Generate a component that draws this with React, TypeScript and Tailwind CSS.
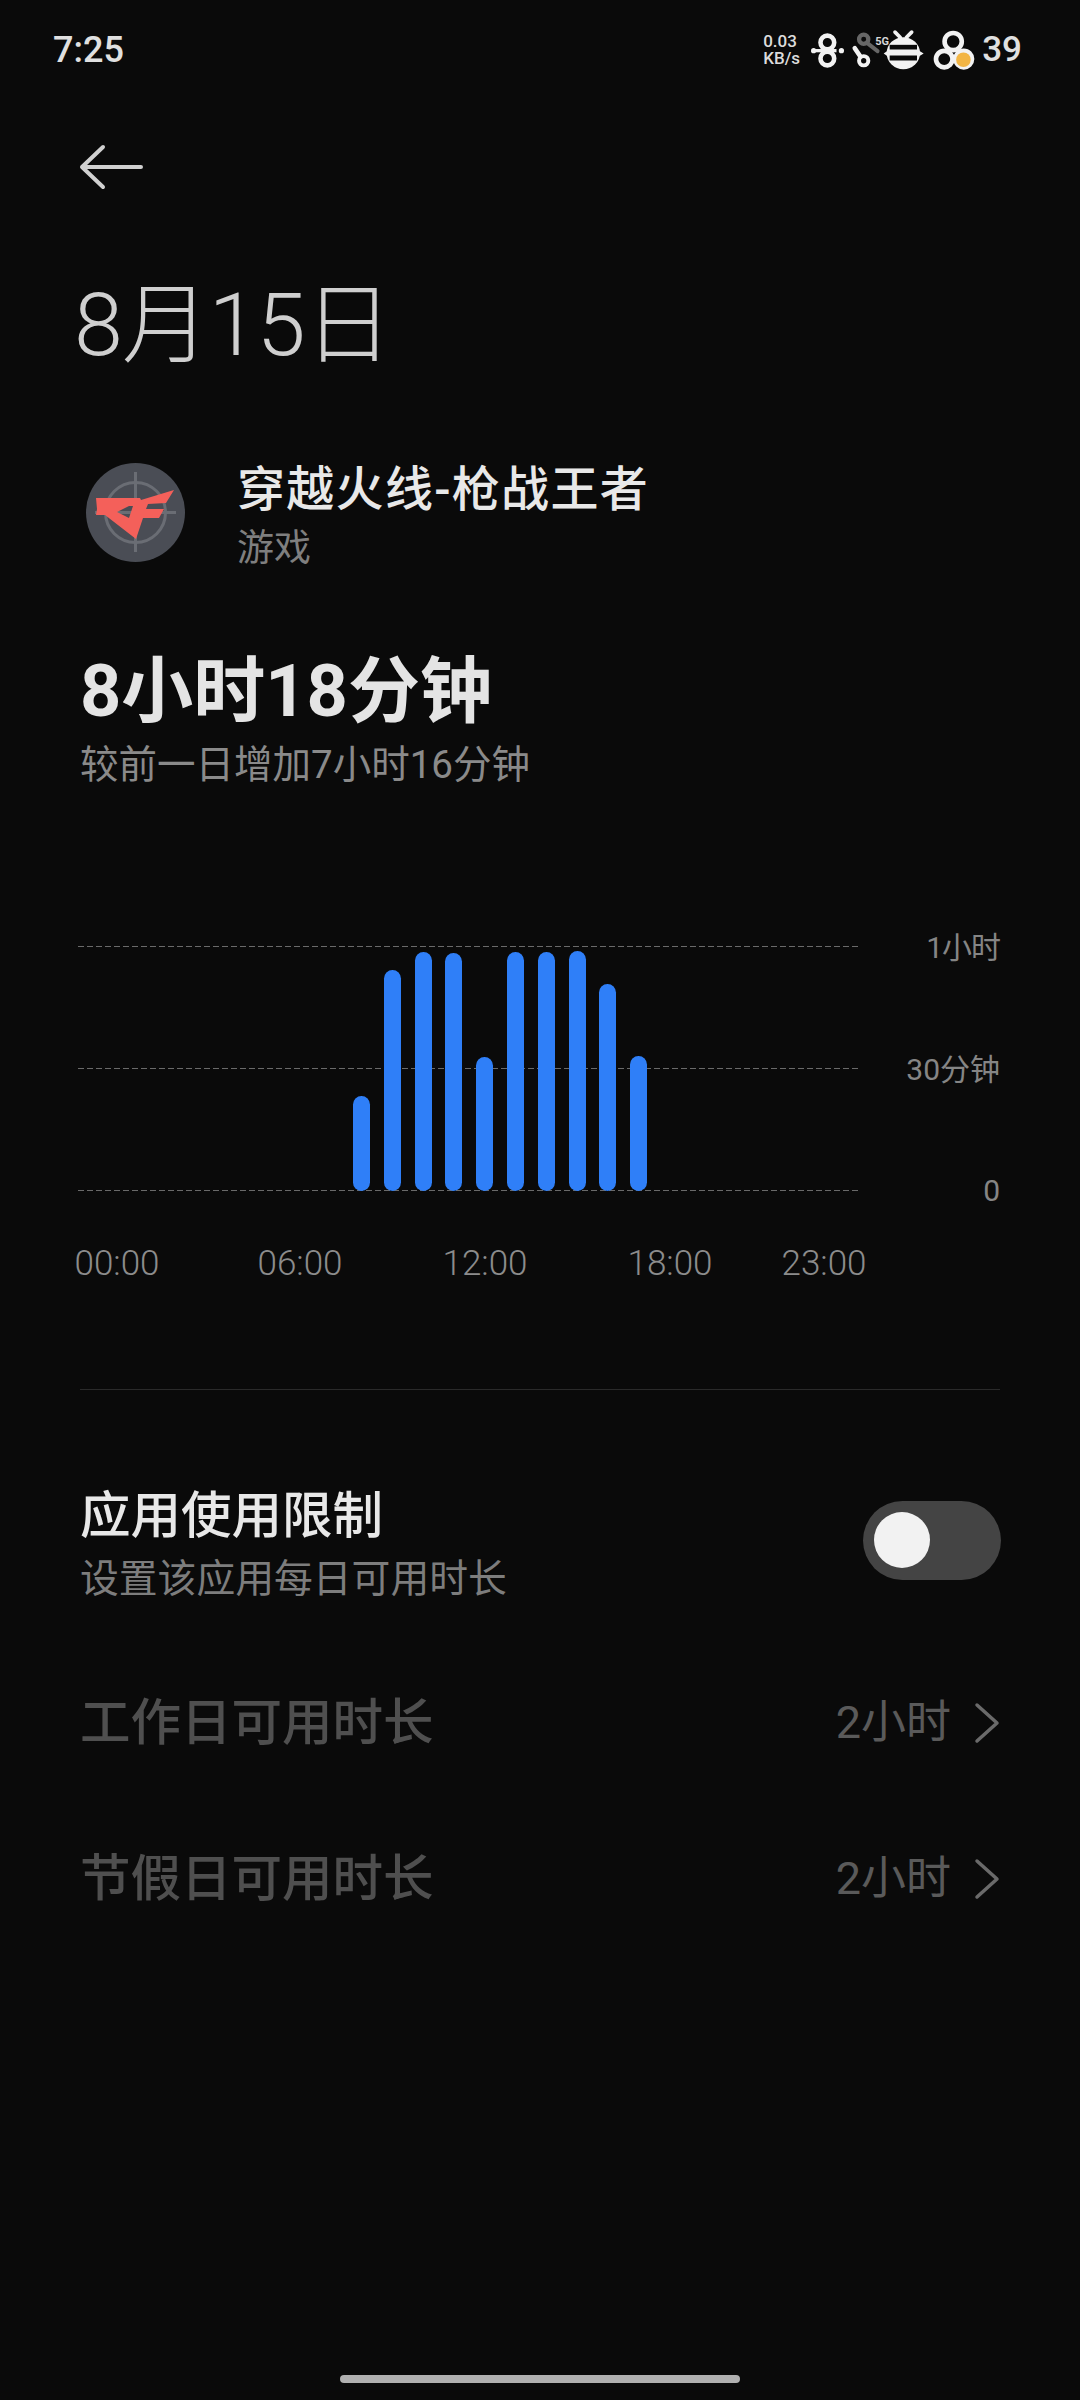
import React from "react";

const font = { fontFamily: '"Roboto", "Noto Sans CJK SC", sans-serif' };
const dash = "h-px bg-[repeating-linear-gradient(90deg,#6a6a6a_0_6px,transparent_6px_9px)]";
const bar = "w-[17px] rounded-full bg-[#2f7ff8]";

function Net8() {
  return (
    <svg width="34" height="35" viewBox="218 65 104 105" fill="none" stroke="#f2f2f2" strokeWidth="14" className="block">
      <circle cx="268" cy="93" r="21" />
      <circle cx="268" cy="142" r="21" />
      <circle cx="226" cy="118" r="8" fill="#f2f2f2" stroke="none" />
      <circle cx="311" cy="118" r="8" fill="#f2f2f2" stroke="none" />
      <path d="M232 118 H296" strokeWidth="10" />
    </svg>
  );
}

function KeyIcon() {
  return (
    <span className="relative block w-[30px] h-[38px]">
      <svg width="30" height="38" viewBox="340 65 90 115" fill="none" strokeLinecap="round" className="block">
        <circle cx="378" cy="90" r="14" stroke="#666666" strokeWidth="13" />
        <path d="M392 104 L420 126" stroke="#666666" strokeWidth="12" />
        <circle cx="378" cy="155" r="14" stroke="#f2f2f2" strokeWidth="12" />
        <path d="M351 117 L368 142" stroke="#f2f2f2" strokeWidth="14" />
      </svg>
      <span className="absolute left-[24px] top-[4px] text-[11px] leading-[13px] font-bold text-[#d8d8d8]">5G</span>
    </span>
  );
}

function BeeIcon() {
  return (
    <svg width="45" height="42" viewBox="430 55 135 125" fill="none" className="block">
      <path d="M472 64 L488 80 M522 64 L506 80" stroke="#f2f2f2" strokeWidth="11" strokeLinecap="round" />
      <ellipse cx="497" cy="127" rx="50" ry="48" fill="#f2f2f2" />
      <path d="M438 128 L452 118 V138 Z M558 128 L542 118 V138 Z" fill="#f2f2f2" />
      <rect x="456" y="102" width="82" height="14" fill="#0a0a0a" />
      <rect x="456" y="134" width="82" height="15" fill="#0a0a0a" />
    </svg>
  );
}

function HiveIcon() {
  return (
    <svg width="43" height="42" viewBox="585 55 130 125" fill="none" className="block">
      <circle cx="646" cy="92" r="26" stroke="#f2f2f2" strokeWidth="14" />
      <circle cx="619" cy="145" r="25" stroke="#f2f2f2" strokeWidth="14" fill="#0a0a0a" />
      <circle cx="678" cy="145" r="25" stroke="#f2f2f2" strokeWidth="14" fill="#0a0a0a" />
      <circle cx="677" cy="147" r="22" fill="#f2b544" />
    </svg>
  );
}

function CfLogo() {
  return (
    <svg width="99" height="99" viewBox="0 0 99 99" className="block">
      <circle cx="49.5" cy="49.5" r="49.5" fill="#4a4d55" />
      <circle cx="49.5" cy="49.5" r="30" fill="none" stroke="#6a6d74" strokeWidth="3" />
      <path d="M49.5 9 V89 M9 49.5 H90" stroke="#6a6d74" strokeWidth="3" />
      <path
        fillRule="evenodd"
        fill="#f4605a"
        d="M10 35 L54 35 L55 37 L88 27 L80 40 L62 41 L60 46 L78 46 L73 55 L57 55 L50 76 L19 52 L10 52 L11 46 Z M43 43 L31 49 L43 55 L47 43 Z"
      />
    </svg>
  );
}

function Chevron() {
  return (
    <svg width="26" height="44" viewBox="0 0 26 44" fill="none" stroke="#6a6a6a" strokeWidth="3.5" strokeLinecap="round" strokeLinejoin="round">
      <path d="M3 4 L23 22 L3 40" />
    </svg>
  );
}

export default function App() {
  return (
    <div className="w-[1080px] h-[2400px] bg-[#0a0a0a] overflow-hidden flex flex-col" style={font}>
      {/* status bar */}
      <div className="h-[100px] shrink-0 pl-[53px] pr-[58px] flex items-center justify-between">
        <span className="text-[36px] leading-[40px] font-medium text-[#e0e0e0]">7:25</span>
        <div className="flex items-center">
          <div className="flex flex-col text-[17px] leading-[17px] font-medium text-[#dcdcdc] w-[48px]">
            <span>0.03</span>
            <span>KB/s</span>
          </div>
          <Net8 />
          <span className="w-[6px]" />
          <KeyIcon />
          <BeeIcon />
          <span className="w-[7px]" />
          <HiveIcon />
          <span className="ml-[6px] text-[35px] leading-[40px] font-medium text-[#e0e0e0]">39</span>
        </div>
      </div>

      {/* back */}
      <div className="h-[134px] shrink-0 pl-[79px] flex items-center">
        <svg width="64" height="46" viewBox="0 0 64 46" fill="none" stroke="#d0d0d0" strokeWidth="4" strokeLinecap="round" strokeLinejoin="round">
          <path d="M24 3 L3 23 L24 43 M3 23 H62" />
        </svg>
      </div>

      {/* title */}
      <div className="h-[176px] shrink-0 pl-[74px] pt-[6px] flex items-center">
        <h1 className="text-[88px] leading-[100px] font-light text-[#cfcfcf] whitespace-nowrap tracking-[-1px]">8月15日</h1>
      </div>

      {/* app */}
      <div className="mt-[53px] h-[99px] shrink-0 pl-[86px] flex items-center">
        <CfLogo />
        <div className="ml-[52px] mt-[7px] flex flex-col">
          <span className="text-[48px] leading-[56px] font-medium text-[#e8e8e8] tracking-[1.3px] whitespace-nowrap">穿越火线-枪战王者</span>
          <span className="text-[37px] leading-[44px] mt-[9px] text-[#7f7f7f]">游戏</span>
        </div>
      </div>

      {/* total */}
      <div className="mt-[90px] pl-[80px] flex flex-col shrink-0">
        <span className="text-[72px] leading-[80px] font-bold text-[#e4e4e4] whitespace-nowrap">8小时18分钟</span>
        <span className="text-[38.5px] leading-[44px] mt-[11px] text-[#8a8a8a] whitespace-nowrap">较前一日增加7小时16分钟</span>
      </div>

      {/* chart */}
      <div className="mt-[159px] pl-[78px] pr-[80px] flex shrink-0">
        <div className="relative w-[781px] h-[245px] flex flex-col justify-between">
          <div className={dash} />
          <div className={dash} />
          <div className={dash} />
          <div className="absolute left-[275px] top-0 h-[245px] flex items-end gap-[13.8px]">
            <div className={`${bar} h-[95px]`} />
            <div className={`${bar} h-[221px]`} />
            <div className={`${bar} h-[239px]`} />
            <div className={`${bar} h-[238px]`} />
            <div className={`${bar} h-[134px]`} />
            <div className={`${bar} h-[239px]`} />
            <div className={`${bar} h-[239px]`} />
            <div className={`${bar} h-[240px]`} />
            <div className={`${bar} h-[207px]`} />
            <div className={`${bar} h-[135px]`} />
          </div>
        </div>
        <div className="flex-1 h-[245px] flex flex-col justify-between items-end text-[30px] leading-[36px] text-[#858585]">
          <span className="-mt-[16px] tracking-[-1px]">1小时</span>
          <span>30分钟</span>
          <span className="-mb-[18px]">0</span>
        </div>
      </div>

      {/* x labels */}
      <div className="mt-[53px] pl-[67px] flex shrink-0 text-[35px] leading-[40px] font-light text-[#8c8c8c]">
        <span className="w-[100px] text-center">00:00</span>
        <span className="w-[100px] text-center ml-[83px]">06:00</span>
        <span className="w-[100px] text-center ml-[85px]">12:00</span>
        <span className="w-[100px] text-center ml-[85px]">18:00</span>
        <span className="w-[100px] text-center ml-[54px]">23:00</span>
      </div>

      {/* divider */}
      <div className="mt-[105px] mx-[80px] h-px bg-[#2a2a2a] shrink-0" />

      {/* limit */}
      <div className="mt-[96px] pl-[80px] pr-[79px] flex items-center justify-between shrink-0">
        <div className="flex flex-col">
          <span className="text-[50.5px] leading-[60px] font-medium text-[#e8e8e8] whitespace-nowrap">应用使用限制</span>
          <span className="text-[38.8px] leading-[46px] mt-[10px] text-[#7d7d7d] whitespace-nowrap">设置该应用每日可用时长</span>
        </div>
        <div className="w-[138px] h-[79px] mb-[8px] rounded-full bg-[#444444] flex items-center pl-[11px]">
          <div className="w-[56px] h-[56px] rounded-full bg-[#f2f2f2]" />
        </div>
      </div>

      {/* rows */}
      <div className="mt-[91px] h-[60px] pl-[80px] pr-[80px] flex items-center justify-between shrink-0">
        <span className="text-[50.5px] leading-[60px] font-medium text-[#4f4f4f] whitespace-nowrap">工作日可用时长</span>
        <div className="flex items-center gap-[23px]">
          <span className="text-[45px] leading-[50px] text-[#5a5a5a]">2小时</span>
          <Chevron />
        </div>
      </div>
      <div className="mt-[96px] h-[60px] pl-[80px] pr-[80px] flex items-center justify-between shrink-0">
        <span className="text-[50.5px] leading-[60px] font-medium text-[#4f4f4f] whitespace-nowrap">节假日可用时长</span>
        <div className="flex items-center gap-[23px]">
          <span className="text-[45px] leading-[50px] text-[#5a5a5a]">2小时</span>
          <Chevron />
        </div>
      </div>

      {/* home */}
      <div className="mt-auto mb-[17px] flex justify-center shrink-0">
        <div className="w-[400px] h-[8px] rounded-full bg-[#b0b0b0]" />
      </div>
    </div>
  );
}
